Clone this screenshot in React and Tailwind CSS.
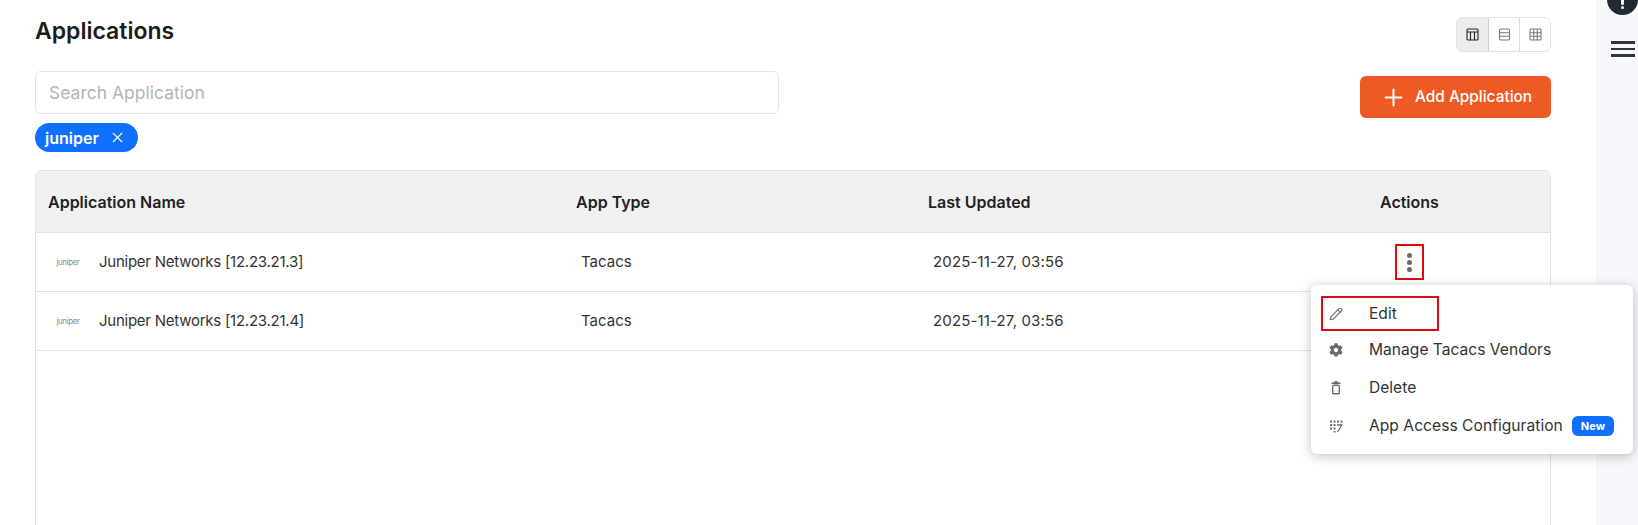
import React from "react";
import { X, Plus, Pencil } from "lucide-react";
import { FaCog } from "react-icons/fa";

const rows = [
  { name: "Juniper Networks [12.23.21.3]", type: "Tacacs", updated: "2025-11-27, 03:56", open: true },
  { name: "Juniper Networks [12.23.21.4]", type: "Tacacs", updated: "2025-11-27, 03:56", open: false },
];

const JuniperLogo = () => (
  <span className="w-[26px] text-center text-[8px] leading-none tracking-[-0.4px] text-[#8a8a8a]">juniper</span>
);

const TrashIcon = () => (
  <svg width="14" height="14" viewBox="0 0 14 14" fill="none" stroke="#6f6f6f" strokeWidth="1.4">
    <path d="M2.5 2.2h9M5 .9h4" />
    <rect x="3.7" y="4.2" width="6.6" height="8.6" rx="0.8" />
  </svg>
);

const AccessIcon = () => (
  <svg width="14" height="14" viewBox="0 0 14 14" fill="#6f6f6f">
    <rect x="1" y="1.5" width="2" height="2" />
    <rect x="4.5" y="1.5" width="2" height="2" />
    <rect x="8" y="1.5" width="2" height="2" />
    <rect x="11.5" y="1.5" width="2" height="2" />
    <rect x="1" y="5" width="2" height="2" />
    <rect x="4.5" y="5" width="2" height="2" />
    <rect x="1" y="8.5" width="2" height="2" />
    <rect x="4.5" y="8.5" width="2" height="2" />
    <rect x="4.5" y="12" width="2" height="1.5" />
    <path d="M8 6h5.5M12.5 6.5 8.5 13" stroke="#6f6f6f" strokeWidth="1.3" fill="none" />
  </svg>
);

const Dots = () => (
  <div className="flex flex-col gap-[2px]">
    <span className="size-[5px] rounded-full bg-[#6b6b6b]" />
    <span className="size-[5px] rounded-full bg-[#6b6b6b]" />
    <span className="size-[5px] rounded-full bg-[#6b6b6b]" />
  </div>
);

const ActionMenu = () => (
  <div className="absolute right-[-209px] top-[41px] z-10 w-[322px] rounded-md bg-white px-[10px] pt-[11px] pb-[9px] shadow-[0_2px_12px_rgba(0,0,0,0.25)]">
    <div className="flex h-[35px] w-[118px] items-center border-[2px] border-[#e30613] pl-[6px]">
      <Pencil size={14} strokeWidth={1.8} className="text-[#6a6a6a]" />
      <span className="ml-[26px] text-[15.6px] text-[#333]">Edit</span>
    </div>
    <div className="flex h-[38px] items-center pl-[8px]">
      <FaCog size={14} className="text-[#6a6a6a]" />
      <span className="ml-[26px] text-[15.6px] text-[#333]">Manage Tacacs Vendors</span>
    </div>
    <div className="flex h-[38px] items-center pl-[8px]">
      <TrashIcon />
      <span className="ml-[26px] text-[15.6px] text-[#333]">Delete</span>
    </div>
    <div className="flex h-[38px] items-center pl-[8px]">
      <AccessIcon />
      <span className="ml-[26px] text-[15.6px] tracking-[0.03px] text-[#333]">App Access Configuration</span>
      <span className="ml-[9px] rounded-[6px] bg-[#0f6fff] px-[9px] py-[2px] text-[11px] font-bold text-white">New</span>
    </div>
  </div>
);

export default function App() {
  return (
    <div className="flex h-[525px] w-[1638px] overflow-hidden bg-white font-['Inter','Liberation_Sans',sans-serif]">
      <main className="relative min-w-0 flex-1 pl-[35px] pr-[45px]">
        <div className="flex items-start justify-between pt-[17px]">
          <h1 className="text-[23px] leading-[28px] font-semibold text-[#1c1c1c]">Applications</h1>
          <div className="flex h-[35px] overflow-hidden rounded-md border border-[#e2e2e2]">
            <button className="flex w-[32px] items-center justify-center border-r border-[#cfcfcf] bg-[#ececec]">
              <svg width="13" height="13" viewBox="0 0 13 13" fill="none" stroke="#222" strokeWidth="1.1"><rect x="1" y="1" width="11" height="11" rx="1" /><path d="M1 4h11M4.5 4v8M8.5 4v8" /></svg>
            </button>
            <button className="flex w-[31px] items-center justify-center border-r border-[#dcdcdc]">
              <svg width="13" height="13" viewBox="0 0 13 13" fill="none" stroke="#777" strokeWidth="1.1"><rect x="1.5" y="1" width="10" height="11" rx="1.5" /><path d="M1.5 4.7h10M1.5 8.3h10" /></svg>
            </button>
            <button className="flex w-[30px] items-center justify-center">
              <svg width="13" height="13" viewBox="0 0 13 13" fill="none" stroke="#777" strokeWidth="1.1"><rect x="1" y="1" width="11" height="11" rx="1" /><path d="M1 4.7h11M1 8.3h11M4.7 1v11M8.3 1v11" /></svg>
            </button>
          </div>
        </div>

        <div className="mt-[19px] flex items-start justify-between">
          <div>
            <input
              placeholder="Search Application"
              className="h-[43px] w-[744px] rounded-md border border-[#e4e4e4] px-[13px] text-[17.5px] placeholder:text-[#b4b4b4]"
            />
            <div className="mt-[9px] flex h-[29px] w-[103px] items-center rounded-full bg-[#0f6fff] pl-[10px] text-white">
              <span className="text-[16px] font-semibold">juniper</span>
              <X size={17} strokeWidth={1.6} className="ml-[10px]" />
            </div>
          </div>
          <button className="mt-[5px] flex h-[42px] w-[191px] items-center rounded-md bg-[#ef5a24] pl-[20px] text-white">
            <Plus size={27} strokeWidth={1.8} />
            <span className="ml-[8px] text-[15.4px] font-medium">Add Application</span>
          </button>
        </div>

        <div className="mt-[18px] h-[400px] rounded-md border border-[#e2e2e2]">
          <div className="flex h-[62px] items-center rounded-t-md border-b border-[#e2e2e2] bg-[#f0f0f0] text-[16px] font-semibold text-[#1f1f1f]">
            <div className="w-[540px] pl-[12px]">Application Name</div>
            <div className="w-[352px]">App Type</div>
            <div className="w-[452px]">Last Updated</div>
            <div>Actions</div>
          </div>
          {rows.map((row) => (
            <div key={row.name} className="flex h-[59px] items-center border-b border-[#e2e2e2] text-[15px] text-[#333]">
              <div className="flex w-[545px] items-center pl-[19px]">
                <JuniperLogo />
                <span className="ml-[18px] tracking-[-0.25px]">{row.name}</span>
              </div>
              <div className="w-[352px]">{row.type}</div>
              <div className="w-[462px] tracking-[0.15px]">{row.updated}</div>
              {row.open && (
                <div className="relative">
                  <div className="flex h-[36px] w-[29px] items-center justify-center border-[2px] border-[#e30613]">
                    <Dots />
                  </div>
                  <ActionMenu />
                </div>
              )}
            </div>
          ))}
        </div>
      </main>

      <aside className="relative w-[42px] bg-[#f6f8fb]">
        <div className="absolute -top-[16px] left-[11px] flex size-[31px] flex-col items-center justify-end rounded-full bg-[#1f2a33] pb-[6px]">
          <span className="h-[6px] w-[3px] rounded-sm bg-white" />
          <span className="mt-[1px] size-[3px] rounded-full bg-white" />
        </div>
        <div className="ml-[15px] mt-[41px] flex w-[24px] flex-col gap-[4px]">
          <span className="h-[2.5px] bg-[#2b3640]" />
          <span className="h-[2.5px] bg-[#2b3640]" />
          <span className="h-[2.5px] bg-[#2b3640]" />
        </div>
      </aside>
    </div>
  );
}
